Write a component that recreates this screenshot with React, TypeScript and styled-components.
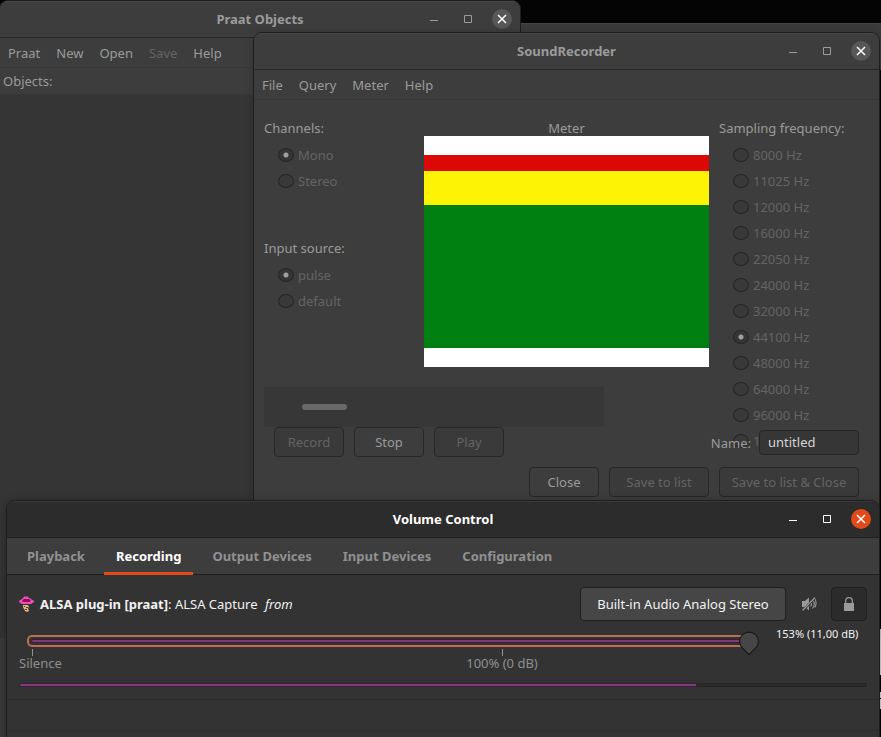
import React from "react";
import styled, { createGlobalStyle } from "styled-components";

const Global = createGlobalStyle`
  *, *::before, *::after { box-sizing: border-box; }
  body { margin: 0; background: #000; }
  button, input { font: inherit; color: inherit; margin: 0; }
`;

const Desktop = styled.main`
  position: relative;
  height: 100vh;
  overflow: hidden;
  background: #040404;
  font-family: "Noto Sans", "Open Sans", sans-serif;
  font-size: 13px;
  line-height: 18px;
  color: #9b9b9b;
`;

/* Sliver of the screen to the right of the windows */
const ScreenEdge = styled.div`
  position: absolute;
  top: 0;
  right: 0;
  bottom: 0;
  width: 1px;
  background: linear-gradient(
    #040404 23px, #3a3a3a 23px 70px, #000 70px 629px, #ddd 629px 675px,
    #000 675px 692px, #ddd 692px 698px, #000 698px 699px, #ddd 699px 709px, #000 709px
  );
`;

const Frame = styled.section`
  position: absolute;
  display: flex;
  flex-direction: column;
  border: 1px solid #1e1e1e;
  border-radius: 9px 9px 0 0;
  background: #3d3d3d;
  overflow: hidden;
`;

const BackWindow = styled(Frame)`
  top: 23px;
  left: -1px;
  right: 1px;
  bottom: -1px;
  border-radius: 0;
  border-top-color: #464646;
  border-right: 0;
  background: #3a3a3a;
`;

const ObjectsWindow = styled(Frame)`
  top: 0;
  left: -1px;
  width: 522px;
  height: 638px;
  border-bottom: 0;
`;

const RecorderWindow = styled(Frame)`
  top: 32px;
  left: 253px;
  right: 1px;
  bottom: 100px;
  box-shadow: 0 0 8px rgba(0, 0, 0, 0.15);
`;

const VolumeWindow = styled(Frame)`
  top: 500px;
  left: 6px;
  right: 1px;
  bottom: -1px;
  background: #333;
  box-shadow: 0 2px 10px 1px rgba(0, 0, 0, 0.28);
`;

const TitleBar = styled.header<{ $active?: boolean }>`
  display: grid;
  grid-template-columns: 1fr auto 1fr;
  align-items: center;
  height: 37px;
  padding: 0 8px;
  flex-shrink: 0;
  background: ${(p) => (p.$active ? "#2c2c2c" : "#3d3d3d")};
  border-bottom: 1px solid ${(p) => (p.$active ? "#202020" : "#272727")};
  box-shadow: inset 0 1px ${(p) => (p.$active ? "#393939" : "#4a4a4a")};
  color: ${(p) => (p.$active ? "#fff" : "#9b9b9b")};
`;

const Title = styled.h1`
  grid-column: 2;
  margin: 0;
  font-size: 13px;
  line-height: 18px;
  font-weight: 700;
`;

const WindowButtons = styled.div`
  display: flex;
  justify-content: flex-end;
  gap: 14px;
`;

const WindowButton = styled.button<{ $fill?: string }>`
  width: 20px;
  height: 20px;
  padding: 0;
  border: 0;
  border-radius: 50%;
  background: ${(p) => p.$fill ?? "transparent"};
  color: ${(p) => (p.$fill ? "#fff" : "inherit")};
`;

const Glyph = styled.svg`
  display: block;
  fill: none;
  stroke: currentColor;
`;

const MenuBar = styled.nav`
  display: flex;
  gap: 16px;
  height: 30px;
  padding: 0 8px;
  flex-shrink: 0;
  border-bottom: 1px solid #373737;
`;

const MenuItem = styled.button`
  padding: 0;
  border: 0;
  background: none;
  &:disabled { color: #646464; }
`;

const ListHeading = styled.div`
  padding: 4px 3px;
`;

const ListArea = styled.div`
  flex: 1;
  background: #353535;
`;

const RecorderBody = styled.form`
  display: flex;
  flex-direction: column;
  gap: 10px;
  padding: 19px 20px 0 10px;
`;

const Settings = styled.div`
  display: grid;
  grid-template-columns: 160px 1fr 140px;
  height: 258px;
`;

const Group = styled.fieldset`
  min-width: 0;
  height: 120px;
  margin: 0;
  padding: 0;
  border: 0;
`;

const Legend = styled.legend`
  padding: 0;
  margin-bottom: 5px;
`;

const Choice = styled.label`
  display: flex;
  align-items: center;
  gap: 4px;
  height: 26px;
  padding-left: 14px;
  color: #646464;
`;

const Radio = styled.input`
  appearance: none;
  flex: none;
  width: 16px;
  height: 14px;
  border: 1px solid #262626;
  border-radius: 50%;
  background: #393939;
  &:checked { background: radial-gradient(circle, #a0a0a0 2px, #353535 3px); }
`;

const MeterColumn = styled.figure`
  margin: 0 10px 0 0;
`;

const MeterLabel = styled.figcaption`
  height: 17px;
  text-align: center;
`;

const Band = styled.div<{ $color: string; $height: number }>`
  height: ${(p) => p.$height}px;
  background: ${(p) => p.$color};
`;

const Lower = styled.div`
  position: relative;
  display: flex;
  align-items: flex-end;
  justify-content: space-between;
`;

const ProgressArea = styled.div`
  width: 340px;
  height: 40px;
  padding: 17px 38px;
  background: #373737;
`;

const ProgressPill = styled.div`
  width: 45px;
  height: 6px;
  border-radius: 3px;
  background: #696969;
`;

const ButtonRow = styled.div<{ $end?: boolean }>`
  display: flex;
  gap: 10px;
  padding-left: 10px;
  justify-content: ${(p) => (p.$end ? "flex-end" : "flex-start")};
`;

const PushButton = styled.button<{ $width: number }>`
  width: ${(p) => p.$width}px;
  height: 30px;
  padding: 0;
  border: 1px solid #272727;
  border-radius: 4px;
  background: #3d3d3d;
  white-space: nowrap;
  &:disabled { color: #646464; background: #3a3a3a; }
`;

const NameField = styled.label`
  display: flex;
  align-items: center;
  gap: 8px;
  margin-bottom: 2px;
`;

const NameInput = styled.input`
  width: 100px;
  height: 25px;
  padding: 0 8px 2px;
  border: 1px solid #262626;
  border-radius: 4px;
  background: #363636;
  color: #d4d4d4;
`;

const Tabs = styled.div`
  display: flex;
  gap: 7px;
  height: 37px;
  padding-left: 8px;
  flex-shrink: 0;
  background: #3d3d3d;
  box-shadow: inset 0 -1px #202020;
`;

const Tab = styled.button`
  height: 37px;
  padding: 1px 12px 0;
  border: 0;
  border-bottom: 3px solid transparent;
  background: none;
  font-weight: 700;
  color: #919191;
  white-space: nowrap;
  &[aria-selected="true"] { color: #fff; border-color: #e2491b; }
`;

const Stream = styled.article`
  padding: 12px;
  border-bottom: 1px solid #2b2b2b;
  color: #f2f2f2;
`;

const StreamHeader = styled.div`
  display: flex;
  align-items: center;
`;

const StreamName = styled.p`
  flex: 1;
  margin: 0 0 0 6px;
  i { margin-left: 4px; }
`;

const DeviceButton = styled.button`
  width: 206px;
  height: 34px;
  padding: 0;
  border: 1px solid #202020;
  border-radius: 4px;
  background: #464646;
  white-space: nowrap;
`;

const IconButton = styled.button<{ $pressed?: boolean }>`
  display: grid;
  place-items: center;
  width: ${(p) => (p.$pressed ? 36 : 45)}px;
  height: 34px;
  padding: 0;
  border: 1px solid ${(p) => (p.$pressed ? "#202020" : "transparent")};
  border-radius: 4px;
  background: ${(p) => (p.$pressed ? "#2b2b2b" : "none")};
  color: #9b9b9b;
`;

const VolumeRow = styled.div`
  display: flex;
  gap: 17px;
`;

const SliderArea = styled.div`
  flex: 1;
  padding-top: 10px;
`;

const SliderStack = styled.div`
  display: grid;
  margin-left: 8px;
  > * { grid-area: 1 / 1; }
`;

const Trough = styled.div`
  height: 12px;
  margin: 4px 10px 0 0;
  padding: 2px;
  border: 2px solid #bd6e50;
  border-radius: 5px;
`;

const TroughFill = styled.div`
  height: 4px;
  border: 1px solid #3b1d3a;
  border-radius: 2px;
  background: #7d3c79;
`;

const thumb = encodeURIComponent(
  '<svg xmlns="http://www.w3.org/2000/svg" width="20" height="25"><path d="M10 23.6 3 16.7A9.4 9.4 0 1 1 17 16.7Z" fill="#464646" stroke="#181818" stroke-width="1.2"/></svg>'
);

const Slider = styled.input`
  appearance: none;
  width: 100%;
  height: 24px;
  background: none;
  &::-webkit-slider-thumb {
    appearance: none;
    width: 20px;
    height: 25px;
    background: url("data:image/svg+xml,${thumb}") no-repeat;
  }
`;

const Marks = styled.div`
  display: grid;
  grid-template-columns: 226fr 514fr;
  margin-top: -6px;
  line-height: 14px;
  color: #8f8f8f;
`;

const Mark = styled.div<{ $center?: boolean }>`
  text-align: ${(p) => (p.$center ? "center" : "left")};
  &::before {
    content: "";
    display: block;
    width: 1px;
    height: 7px;
    margin: 0 ${(p) => (p.$center ? "auto" : "13px")};
    background: #8f8f8f;
  }
`;

const VolumeValue = styled.output`
  width: 91px;
  padding-top: 4px;
  font-size: 11px;
  white-space: nowrap;
`;

const Level = styled.div`
  height: 4px;
  margin-top: 13px;
  border-radius: 2px;
  background: #2b2b2b;
  box-shadow: inset 0 0 0 1px #242424;
`;

const LevelFill = styled.div`
  width: 80%;
  height: 4px;
  border: 1px solid #3b1d3a;
  border-radius: 2px 0 0 2px;
  background: #7d3c79;
`;

const ShowBar = styled.footer`
  height: 31px;
  border-bottom: 1px solid #2d2d2d;
`;

function Header({ title, active }: { title: string; active?: boolean }) {
  return (
    <TitleBar $active={active}>
      <Title>{title}</Title>
      <WindowButtons>
        <WindowButton type="button" aria-label="Minimize">
          <Glyph width="20" height="20"><path d="M6 11.5h8" /></Glyph>
        </WindowButton>
        <WindowButton type="button" aria-label="Maximize">
          <Glyph width="20" height="20"><path d="M6.5 6.5h7v7h-7z" /></Glyph>
        </WindowButton>
        <WindowButton type="button" aria-label="Close" $fill={active ? "#e2491b" : "#575757"}>
          <Glyph width="20" height="20"><path d="m6 6 8 8m0-8-8 8" strokeWidth="1.5" /></Glyph>
        </WindowButton>
      </WindowButtons>
    </TitleBar>
  );
}

function Menu({ items, disabled }: { items: string[]; disabled?: string }) {
  return (
    <MenuBar>
      {items.map((item) => (
        <MenuItem key={item} type="button" disabled={item === disabled}>{item}</MenuItem>
      ))}
    </MenuBar>
  );
}

function Choices({ legend, options, selected }: { legend: string; options: string[]; selected: string }) {
  return (
    <Group>
      <Legend>{legend}</Legend>
      {options.map((option) => (
        <Choice key={option}>
          <Radio type="radio" name={legend} disabled defaultChecked={option === selected} />
          {option}
        </Choice>
      ))}
    </Group>
  );
}

const rates = [8000, 11025, 12000, 16000, 22050, 24000, 32000, 44100, 48000, 64000, 96000, 192000];

const bands: [string, number][] = [
  ["#fff", 19],
  ["#dc0806", 16],
  ["#fcf305", 34],
  ["#008011", 143],
  ["#fff", 19],
];

const tabs = ["Playback", "Recording", "Output Devices", "Input Devices", "Configuration"];

function PraatIcon() {
  return (
    <svg width="15" height="16" viewBox="0 0 15 16" aria-hidden="true">
      <path d="M0 6V5l3-2 2-2 1-1 1 1 1-1 2 2 2 1 3 2v1l-3 2H3Z" fill="#ed4fbd" />
      <path d="M3 5 5 3h5l2 2-2 1H4Z" fill="#920057" />
      <path d="M4 9h5l1 2-1 1 1 3-2 1-2-1-1-2-1-2Z" fill="#e1b37d" />
      <path d="M5 10h1v1H5zm2 1h2v1H7zM6 13h2v1H6z" fill="#59391f" />
    </svg>
  );
}

function MuteIcon() {
  return (
    <svg width="16" height="16" viewBox="0 0 16 16" aria-hidden="true">
      <path d="M1 5h3l4-3.5v13L4 11H1Z" fill="currentColor" />
      <path d="M9.5 5.5q2 2.5 0 5m2-7q3.5 4.5 0 9m2-10.5q3 5 .3 9.5" fill="none" stroke="currentColor" strokeWidth="1.1" />
      <path d="M1 15.5 14 1.5" stroke="#333" strokeWidth="2.5" />
      <path d="M1.5 14.5 14 1.5" stroke="currentColor" strokeWidth="1.1" />
    </svg>
  );
}

function LockIcon() {
  return (
    <svg width="16" height="16" viewBox="0 0 16 16" aria-hidden="true">
      <path d="M3 7h10v8H3z" fill="currentColor" />
      <path d="M4.7 8V5a3.3 3.3 0 0 1 6.6 0v3" fill="none" stroke="currentColor" strokeWidth="1.3" />
    </svg>
  );
}

export default function App() {
  return (
    <Desktop>
      <Global />
      <ScreenEdge />
      <BackWindow aria-hidden="true" />

      <ObjectsWindow>
        <Header title="Praat Objects" />
        <Menu items={["Praat", "New", "Open", "Save", "Help"]} disabled="Save" />
        <ListHeading>Objects:</ListHeading>
        <ListArea />
      </ObjectsWindow>

      <RecorderWindow>
        <Header title="SoundRecorder" />
        <Menu items={["File", "Query", "Meter", "Help"]} />
        <RecorderBody onSubmit={(e) => e.preventDefault()}>
          <Settings>
            <div>
              <Choices legend="Channels:" options={["Mono", "Stereo"]} selected="Mono" />
              <Choices legend="Input source:" options={["pulse", "default"]} selected="pulse" />
            </div>
            <MeterColumn>
              <MeterLabel>Meter</MeterLabel>
              {bands.map(([color, height], i) => (
                <Band key={i} $color={color} $height={height} />
              ))}
            </MeterColumn>
            <Choices legend="Sampling frequency:" options={rates.map((r) => `${r} Hz`)} selected="44100 Hz" />
          </Settings>
          <Lower>
            <div>
              <ProgressArea><ProgressPill /></ProgressArea>
              <ButtonRow>
                <PushButton type="button" $width={70} disabled>Record</PushButton>
                <PushButton type="button" $width={70}>Stop</PushButton>
                <PushButton type="button" $width={70} disabled>Play</PushButton>
              </ButtonRow>
            </div>
            <NameField>
              Name:
              <NameInput type="text" defaultValue="untitled" />
            </NameField>
          </Lower>
          <ButtonRow $end>
            <PushButton type="button" $width={70}>Close</PushButton>
            <PushButton type="button" $width={100} disabled>Save to list</PushButton>
            <PushButton type="button" $width={140} disabled>Save to list &amp; Close</PushButton>
          </ButtonRow>
        </RecorderBody>
      </RecorderWindow>

      <VolumeWindow>
        <Header title="Volume Control" active />
        <Tabs role="tablist">
          {tabs.map((tab) => (
            <Tab key={tab} type="button" role="tab" aria-selected={tab === "Recording"}>{tab}</Tab>
          ))}
        </Tabs>
        <Stream>
          <StreamHeader>
            <PraatIcon />
            <StreamName><b>ALSA plug-in [praat]</b>: ALSA Capture <i>from</i></StreamName>
            <DeviceButton type="button">Built-in Audio Analog Stereo</DeviceButton>
            <IconButton type="button" aria-label="Mute audio"><MuteIcon /></IconButton>
            <IconButton type="button" aria-label="Lock channels together" aria-pressed="true" $pressed><LockIcon /></IconButton>
          </StreamHeader>
          <VolumeRow>
            <SliderArea>
              <SliderStack>
                <Trough><TroughFill /></Trough>
                <Slider type="range" aria-label="Volume" min={0} max={153} defaultValue={153} />
              </SliderStack>
              <Marks>
                <Mark>Silence</Mark>
                <Mark $center>100% (0 dB)</Mark>
              </Marks>
            </SliderArea>
            <VolumeValue>153% (11,00 dB)</VolumeValue>
          </VolumeRow>
          <Level role="meter" aria-label="Input level" aria-valuemin={0} aria-valuemax={100} aria-valuenow={80}>
            <LevelFill />
          </Level>
        </Stream>
        <ShowBar />
      </VolumeWindow>
    </Desktop>
  );
}
